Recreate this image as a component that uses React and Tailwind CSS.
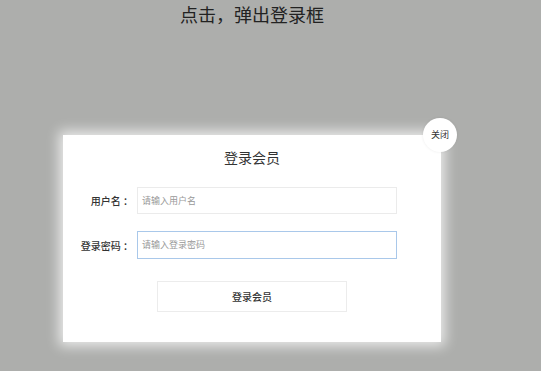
export default function App() {
  return (
    <div className="w-[541px] h-[371px] bg-[#adaeac] overflow-hidden font-['Noto_Sans_CJK_SC','Noto_Sans',sans-serif] text-[#333]">
      <div className="w-[504px] flex flex-col items-center">
        {/* Page title */}
        <h1 className="mt-[3px] text-[18px] leading-[22px] text-[#222]">点击，弹出登录框</h1>

        {/* Login dialog */}
        <div className="relative mt-[110px] w-[378px] h-[207px] bg-white shadow-[0_0_12px_4px_rgba(255,255,255,0.75)] flex flex-col items-center pt-[12px]">
          <button className="absolute -right-[16px] -top-[17px] w-[34px] h-[34px] rounded-full bg-white text-[9px] text-[#333] flex items-center justify-center shadow-[0_0_3px_rgba(0,0,0,0.08)]">
            关闭
          </button>

          <h2 className="text-[14px] leading-[20px] text-[#333]">登录会员</h2>

          <div className="mt-[20px] w-full flex flex-col gap-[17px]">
            <div className="flex items-center">
              <label className="w-[70px] text-right text-[10px] font-medium text-[#333]">用户名 ：</label>
              <div className="ml-[4px] w-[260px] h-[27px] border border-[#ebebeb] flex items-center px-[4px] text-[9px] text-[#999]">
                请输入用户名
              </div>
            </div>
            <div className="flex items-center">
              <label className="w-[70px] text-right text-[10px] font-medium text-[#333]">登录密码 ：</label>
              <div className="ml-[4px] w-[260px] h-[28px] border border-[#a9c8ea] flex items-center px-[4px] text-[9px] text-[#999]">
                请输入登录密码
              </div>
            </div>
          </div>

          <button className="mt-[22px] w-[190px] h-[31px] border border-[#ececec] text-[10px] font-medium text-[#333]">
            登录会员
          </button>
        </div>
      </div>
    </div>
  );
}
